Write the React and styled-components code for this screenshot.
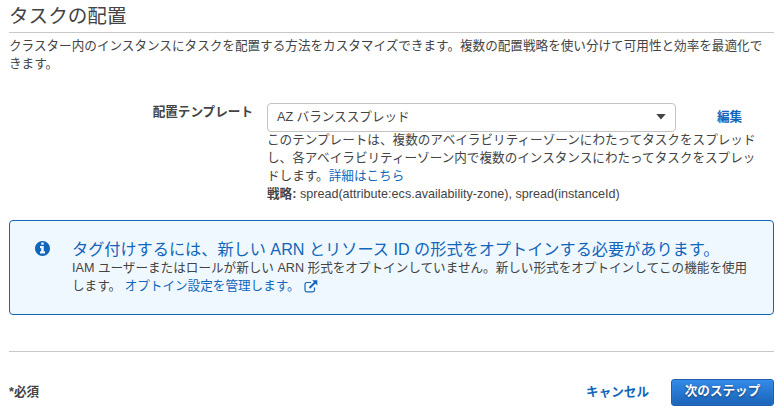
import React from "react";
import styled, { createGlobalStyle, css } from "styled-components";

const GlobalStyle = createGlobalStyle`
  *, *::before, *::after { box-sizing: border-box; }
  body {
    margin: 0;
    background: #fff;
    color: #444;
    font-family: "Liberation Sans", "Noto Sans CJK JP", sans-serif;
    font-size: 12.6px;
    line-height: 18px;
  }
`;

const Page = styled.main`
  width: 783px;
  height: 414px;
  padding: 0 9px;
  overflow: hidden;
  white-space: nowrap;
`;

const Title = styled.h1`
  margin: 0;
  height: 33px;
  padding-top: 2px;
  border-bottom: 1px solid #c8c8c8;
  font-size: 19.6px;
  font-weight: 400;
  line-height: 28px;
`;

const Description = styled.p`
  margin: 4px 0 0;
`;

const Field = styled.div`
  display: grid;
  grid-template-columns: 244px 409px 1fr;
  column-gap: 14px;
  margin-top: 30px;
`;

const Label = styled.label`
  text-align: right;
  font-weight: 700;
`;

const Control = styled.div`
  display: flex;
  flex-direction: column;
`;

const Select = styled.button`
  display: flex;
  align-items: center;
  justify-content: space-between;
  height: 29px;
  padding: 0 9px 1px;
  border: 1px solid #c4c4c4;
  border-radius: 4px;
  background: #fff;
  color: #444;
  font: inherit;
`;

const Help = styled.p`
  margin: -1px 0 0;
`;

const link = css`
  color: #1166bb;
  text-decoration: none;
`;

const Link = styled.a`
  ${link}
  font-weight: ${(p) => (p.$strong ? 700 : 400)};
`;

const EditCell = styled.div`
  padding: 5px 0 0 27px;
`;

const Alert = styled.section`
  display: flex;
  height: 95px;
  margin-top: 17px;
  padding: 18px 0 0 25px;
  border: 1px solid #1166bb;
  border-radius: 4px;
  background: #f0f8ff;
`;

const AlertIcon = styled.svg`
  flex: none;
  width: 15px;
  height: 15px;
  margin: 2px 22.5px 0 -0.5px;
  fill: #1166bb;
`;

const AlertTitle = styled.h2`
  margin: 0;
  color: #1166bb;
  font-size: 16.16px;
  font-weight: 400;
  line-height: 20px;
`;

const AlertText = styled.p`
  margin: 0;
`;

const ExternalIcon = styled.svg`
  width: 14px;
  height: 13px;
  margin-left: 4px;
  vertical-align: -3px;
`;

const Footer = styled.footer`
  display: flex;
  align-items: center;
  height: 63px;
  margin-top: 36px;
  padding-top: 17px;
  border-top: 1px solid #c8c8c8;
`;

const Required = styled.strong`
  flex: 1;
`;

const PrimaryButton = styled.button`
  width: 103px;
  height: 27px;
  margin: 2px 0 0 22px;
  padding: 0 0 3px;
  border: 1px solid #1c5fae;
  border-radius: 3px;
  background: linear-gradient(#338be8, #1b63b8);
  color: #fff;
  font: inherit;
  font-weight: 700;
  text-shadow: 0 1px 2px #143c6e;
  box-shadow: inset 0 0 1px #4a9af0;
`;

export default function App() {
  return (
    <>
      <GlobalStyle />
      <Page lang="ja">
        <Title>タスクの配置</Title>
        <Description>
          クラスター内のインスタンスにタスクを配置する方法をカスタマイズできます。複数の配置戦略を使い分けて可用性と効率を最適化で
          <br />
          きます。
        </Description>
        <Field>
          <Label>配置テンプレート</Label>
          <Control>
            <Select type="button">
              AZ バランススプレッド
              <svg width="10" height="6" viewBox="0 0 10 6">
                <path d="M0.3 0h9.4L5 5.6z" fill="#444" />
              </svg>
            </Select>
            <Help>
              このテンプレートは、複数のアベイラビリティーゾーンにわたってタスクをスプレッド
              <br />
              し、各アベイラビリティーゾーン内で複数のインスタンスにわたってタスクをスプレッ
              <br />
              ドします。<Link href="#">詳細はこちら</Link>
              <br />
              <strong>戦略:</strong> spread(attribute:ecs.availability-zone), spread(instanceId)
            </Help>
          </Control>
          <EditCell>
            <Link href="#" $strong>編集</Link>
          </EditCell>
        </Field>
        <Alert>
          <AlertIcon viewBox="0 128 1536 1536">
            <path d="M1024 1376v-160q0-14-9-23t-23-9h-96v-512q0-14-9-23t-23-9h-320q-14 0-23 9t-9 23v160q0 14 9 23t23 9h96v320h-96q-14 0-23 9t-9 23v160q0 14 9 23t23 9h448q14 0 23-9t9-23zm-128-896v-160q0-14-9-23t-23-9h-192q-14 0-23 9t-9 23v160q0 14 9 23t23 9h192q14 0 23-9t9-23zm640 416q0 209-103 385.5t-279.5 279.5-385.5 103-385.5-103-279.5-279.5-103-385.5 103-385.5 279.5-279.5 385.5-103 385.5 103 279.5 279.5 103 385.5z" />
          </AlertIcon>
          <div>
            <AlertTitle>タグ付けするには、新しい ARN とリソース ID の形式をオプトインする必要があります。</AlertTitle>
            <AlertText>
              IAM ユーザーまたはロールが新しい ARN 形式をオプトインしていません。新しい形式をオプトインしてこの機能を使用
              <br />
              します。{" "}
              <Link href="#">
                オプトイン設定を管理します。
                <ExternalIcon viewBox="0 0 14 13">
                  <path
                    d="M7 2.5H2.8A1.8 1.8 0 0 0 1 4.3V10a1.8 1.8 0 0 0 1.8 1.8H8.7A1.8 1.8 0 0 0 10.5 10V7.5"
                    fill="none"
                    stroke="#1166bb"
                    strokeWidth="1.2"
                  />
                  <path d="M5.5 8L11 2.5" stroke="#1166bb" strokeWidth="1.9" />
                  <path d="M8.2 0.3H13.3V5.4z" fill="#1166bb" />
                </ExternalIcon>
              </Link>
            </AlertText>
          </div>
        </Alert>
        <Footer>
          <Required>*必須</Required>
          <Link href="#" $strong>キャンセル</Link>
          <PrimaryButton type="button">次のステップ</PrimaryButton>
        </Footer>
      </Page>
    </>
  );
}
